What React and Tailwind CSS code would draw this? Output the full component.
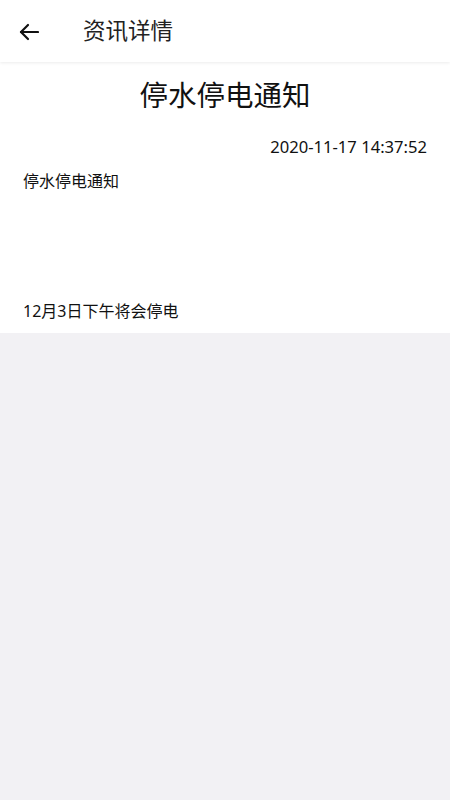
const font = { fontFamily: '"Noto Sans", "Noto Sans CJK SC", sans-serif' };

function BackArrow() {
  return (
    <svg width="20" height="18" viewBox="0 0 20 18" fill="none" stroke="#111" strokeWidth="2.2" strokeLinecap="round" strokeLinejoin="round">
      <path d="M19 9H2" />
      <path d="M9 2L2 9l7 7" />
    </svg>
  );
}

export default function App() {
  return (
    <div className="min-h-[800px] bg-[#f2f1f4] text-[#111]" style={font}>
      <div className="relative z-10 flex h-[62px] items-center bg-white shadow-[0_1px_3px_rgba(0,0,0,0.08)]">
        <div className="ml-[19px] mt-[1px]">
          <BackArrow />
        </div>
        <h1 className="ml-[44px] text-[22.5px] leading-none text-[#222]">资讯详情</h1>
      </div>

      <div className="bg-white px-[23px] pb-[11px]">
        <h2 className="pt-[15px] text-center text-[28.5px] leading-[36px]">停水停电通知</h2>
        <div className="mt-[23px] text-right text-[16.6px] leading-[22px]">
          2020-11-17 14:37:52
        </div>
        <p className="mt-[12px] text-[16px] leading-[22px]">停水停电通知</p>
        <div className="h-[108px]" />
        <p className="text-[16px] leading-[22px]">12月3日下午将会停电</p>
      </div>
    </div>
  );
}
